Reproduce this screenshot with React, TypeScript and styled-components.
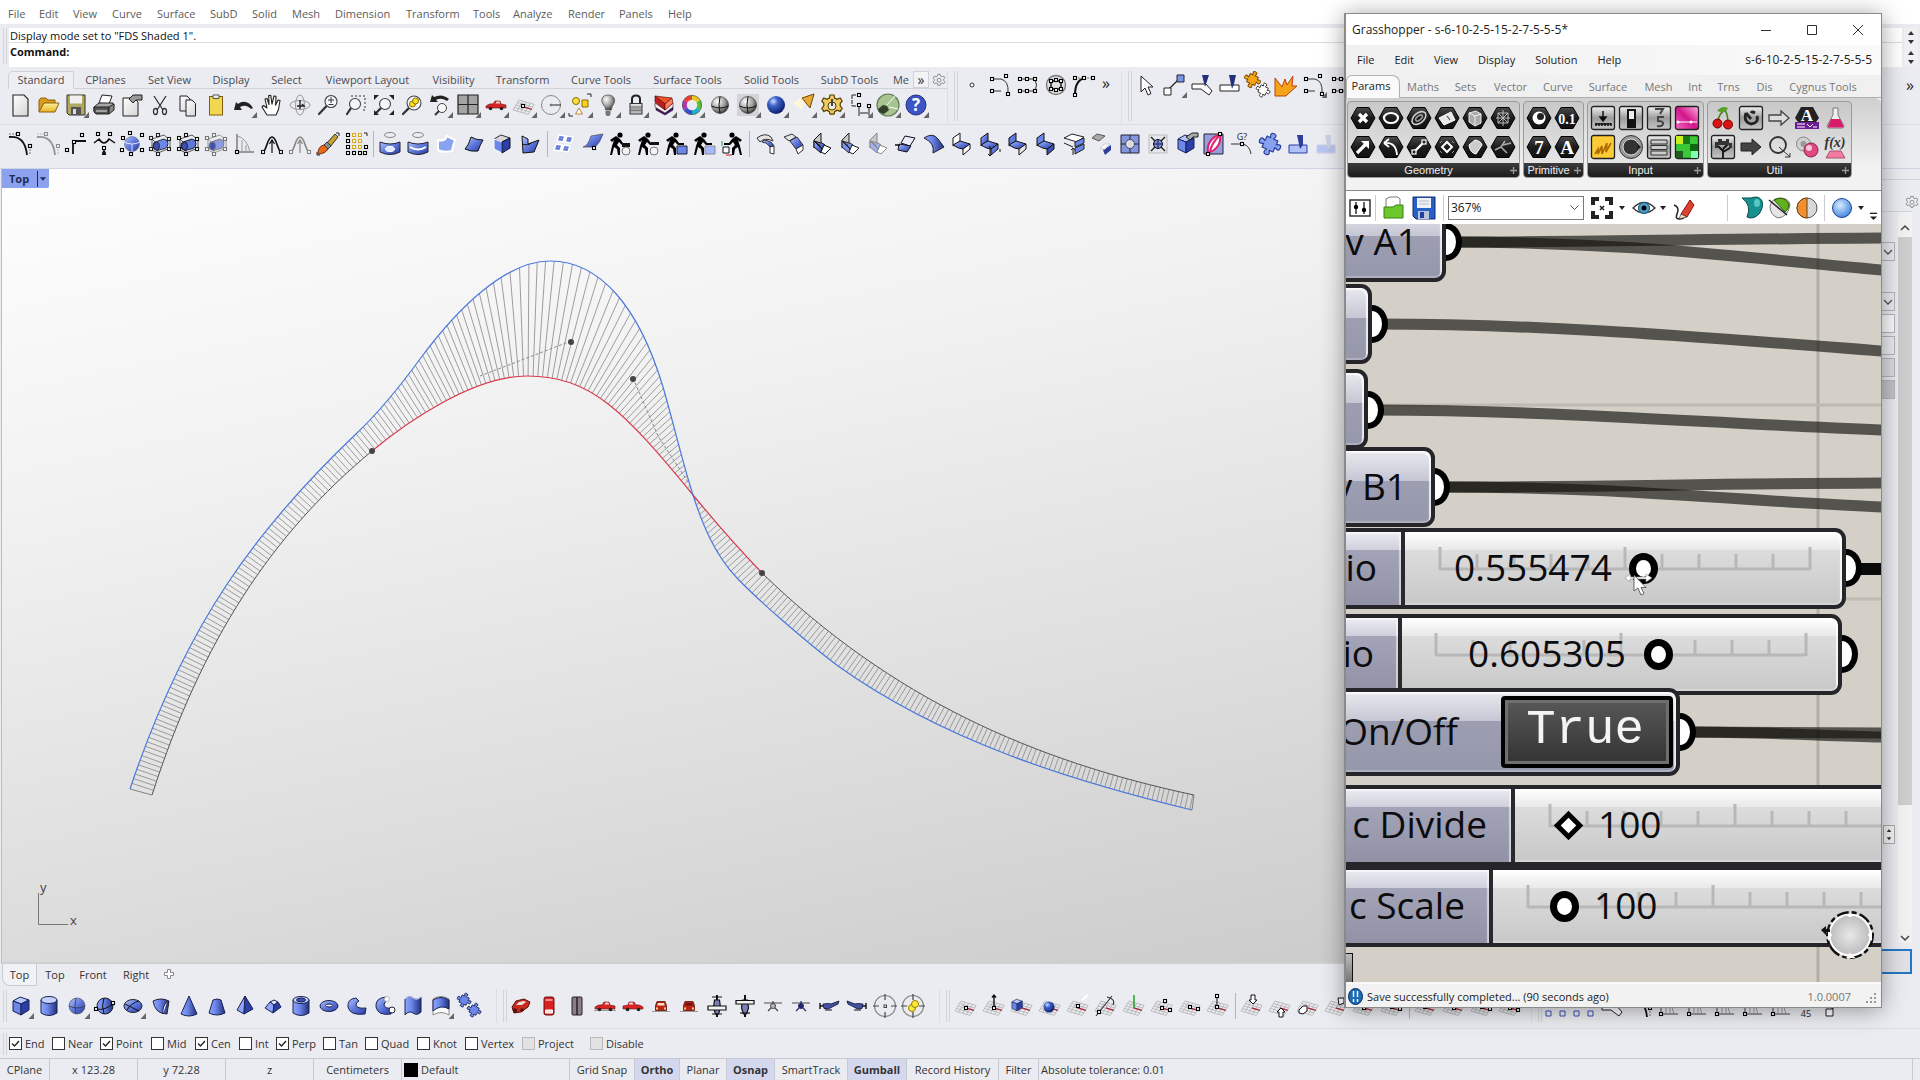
import React, { ReactNode } from "react";
import styled, { createGlobalStyle, css } from "styled-components";

const UI = `"Open Sans", "Noto Sans", "Liberation Sans", sans-serif`;

const Global = createGlobalStyle`
  * { box-sizing: border-box; }
  html, body, #root { height: 100%; margin: 0; }
  body { font: 11px/16px ${UI}; color: #333; background: #ebecf1; overflow: hidden; }
  button, input, select { font: inherit; color: inherit; margin: 0; }
  button { border: 0; padding: 0; background: none; }
`;

/* ---------- shared drawing pieces ---------- */

const DefsSvg = styled.svg`
  position: absolute;
  width: 0;
  height: 0;
`;

const Defs = () => (
  <DefsSvg aria-hidden="true">
    <defs>
      <linearGradient id="blue" x1="0" y1="0" x2="1" y2="1">
        <stop offset="0" stopColor="#b4c4ff" />
        <stop offset=".5" stopColor="#5f78dc" />
        <stop offset="1" stopColor="#2a3a9c" />
      </linearGradient>
      <linearGradient id="blueH" x1="0" y1="0" x2="1" y2="0">
        <stop offset="0" stopColor="#8fa6ff" />
        <stop offset=".4" stopColor="#6c86ea" />
        <stop offset="1" stopColor="#22307e" />
      </linearGradient>
      <radialGradient id="ballBlue" cx=".35" cy=".3" r=".75">
        <stop offset="0" stopColor="#cfe0ff" />
        <stop offset=".35" stopColor="#3d62cc" />
        <stop offset="1" stopColor="#0a1a66" />
      </radialGradient>
      <radialGradient id="ballSky" cx=".4" cy=".35" r=".7">
        <stop offset="0" stopColor="#d8ecff" />
        <stop offset="1" stopColor="#3c82dc" />
      </radialGradient>
      <radialGradient id="ballGray" cx=".35" cy=".3" r=".75">
        <stop offset="0" stopColor="#fff" />
        <stop offset=".6" stopColor="#9a9a9a" />
        <stop offset="1" stopColor="#333" />
      </radialGradient>
      <linearGradient id="yellow" x1="0" y1="0" x2="0" y2="1">
        <stop offset="0" stopColor="#fff0a0" />
        <stop offset="1" stopColor="#e8b420" />
      </linearGradient>
      <linearGradient id="paper" x1="0" y1="0" x2="1" y2="1">
        <stop offset="0" stopColor="#fff" />
        <stop offset="1" stopColor="#d4d4d4" />
      </linearGradient>
      <linearGradient id="hex" x1="0" y1="0" x2="0" y2="1">
        <stop offset="0" stopColor="#4a4a4a" />
        <stop offset=".5" stopColor="#1c1c1c" />
        <stop offset="1" stopColor="#111" />
      </linearGradient>
      <linearGradient id="metal" x1="0" y1="0" x2="0" y2="1">
        <stop offset="0" stopColor="#f2f2f2" />
        <stop offset=".5" stopColor="#9c9c9c" />
        <stop offset="1" stopColor="#c8c8c8" />
      </linearGradient>
      <linearGradient id="pink" x1="0" y1="1" x2="1" y2="0">
        <stop offset="0" stopColor="#f06cc0" />
        <stop offset=".5" stopColor="#d4148c" />
        <stop offset="1" stopColor="#ffb0e0" />
      </linearGradient>
      <radialGradient id="knob" cx=".5" cy=".5" r=".6">
        <stop offset="0" stopColor="#e8e8e8" />
        <stop offset="1" stopColor="#b4b4b4" />
      </radialGradient>
    </defs>
  </DefsSvg>
);

const pt = (x: number, y: number, c = "#000") => (
  <rect key={`${x}-${y}`} x={x - 1.5} y={y - 1.5} width="3" height="3" fill="#fff" stroke={c} strokeWidth="1.1" />
);
const pts = (list: number[][], c?: string) => list.map(([x, y]) => pt(x, y, c));

const planeGrid = (extra?: ReactNode) => (
  <>
    <g stroke="#b0b0b0" strokeWidth=".8" fill="none">
      {[0, 1, 2, 3, 4].map((i) => (
        <path key={i} d={`M${9 + i * 3.8} ${9 + i * 1.1}l-6 10M${9 - i * 1.5} ${9 + i * 2.5}l15.2 4.4`} />
      ))}
    </g>
    <path d="M14 16l8 2.4" stroke="#b03040" strokeWidth="1.4" />
    {extra}
  </>
);

const lens = (x = 15, y = 11, r = 5.5, fill = "#f4f6ff") => (
  <>
    <path d={`M${x - r * 0.7} ${y + r * 0.7}L5 23`} stroke="#333" strokeWidth="2.2" strokeLinecap="round" />
    <circle cx={x} cy={y} r={r} fill={fill} stroke="#444" strokeWidth="1.1" />
  </>
);

const gearPath =
  "M12 4h4l.6 3 2.6 1.4 3-1.4 2 3.2-2 2.2v2.6l2 2.2-2 3.2-3-1.2-2.6 1.4-.6 2.6h-4l-.6-2.6-2.6-1.4-3 1.2-2-3.2 2-2.2v-2.6l-2-2.2 2-3.2 3 1.4L11.4 7z";

const cube = (s = "#1a2250") => (
  <g stroke={s} strokeWidth="1" strokeLinejoin="round">
    <path d="M6 9l7-4 9 3-8 4z" fill="#b8c8ff" />
    <path d="M6 9l8 3v11l-8-4z" fill="#6c86ea" />
    <path d="M14 12l8-4v10l-8 5z" fill="#2c3fa8" />
  </g>
);

const cylPts = (c: string, f: string) => (
  <>
    <path d="M6 9l12-4 6 5-12 5zM6 9v11l6 3 12-5v-8M12 15v8" fill="none" stroke={c} strokeWidth=".7" />
    <path d="M9 12l9-3q4 1 4 4.500t-3 5l-8 2q-4-1-4-4.500t2-4z" fill={f} stroke={c} strokeWidth=".9" />
    <ellipse cx="10.5" cy="16" rx="3" ry="4" fill="#3c50b4" stroke={c} strokeWidth=".8" />
    {pts([[5, 8], [12, 5], [23, 9], [5, 19], [12, 24], [23, 19]], c)}
  </>
);

const man = (obj: ReactNode) => (
  <>
    <circle cx="14" cy="5" r="2.6" fill="#000" />
    <path d="M4 10l6-4 4 3 3 4 5 0v2l-6 0-3-3-2 3 3 3 0 7h-2l-1-6-3-2-2 8H4l2-9 2-6-2 2z" fill="#000" />
    {obj}
  </>
);

const zed = (a: string, b: string) => (
  <g stroke="#111" strokeWidth="1" strokeLinejoin="round">
    <path d="M5 8l7-5v8l-7 5z" fill={a} />
    <path d="M5 15l7-4 10 3-7 5q-4 0-10-4z" fill="url(#blue)" />
    <path d="M15 19l7-5v5l-7 6z" fill={b} />
  </g>
);

const ell = (c: string, f: string) => (
  <g stroke={c} strokeWidth="1" strokeLinejoin="round">
    <path d="M6 10l7-7v10l-7 5z" fill="#c8c8c8" />
    <path d="M6 11l8 8-1 4-7-6z" fill={f} />
    <path d="M6 11q5 2 8 8l3-4q-4-3-4-2z" fill={f} />
    <path d="M16 15l7 3-6 6-4-2z" fill="#fff" />
  </g>
);

const puzzle = (f: string, s: string) => (
  <path
    d="M8 8h4q-3-5 1.500-5t1.500 5h5v4q5-3 5 1.500t-5 1.500v5h-4q3 5-1.500 5t-1.500-5h-5v-4q-5 3-5-1.500t5-1.500z"
    transform="rotate(25 14 14)"
    fill={f}
    stroke={s}
    strokeWidth="1.2"
    strokeLinejoin="round"
  />
);

const bell = (c: string) => (
  <>
    <path d="M4 23c5-2 5-16 10-16s5 14 10 16" fill="none" stroke={c} strokeWidth="1.7" />
    <path d="M14 23V11m-2.500 3l2.500-4 2.500 4" fill="none" stroke={c} strokeWidth="1.2" />
    {pts([[5, 22], [23, 22]], c)}
  </>
);

const doc = <path d="M7 4h11l4 4v17H7z" fill="url(#paper)" stroke="#222" strokeWidth="1.1" />;
const gball = (
  <>
    <circle cx="14" cy="14" r="8.5" fill="url(#ballGray)" stroke="#333" strokeWidth=".6" />
    <path d="M5.500 15q8.500 4 17 0M14 5.500q-2 8 0 17" stroke="#111" fill="none" />
  </>
);
const splitter = (a: string, b: string) => (
  <>
    <path d="M5 15h18v8H5z" fill={b} stroke={a} strokeWidth="1" />
    <path d="M13 5h6v10l-3 4z" fill={a} />
  </>
);
const car = (flip = false) => (
  <g transform={flip ? "translate(28 0) scale(-1 1)" : undefined}>
    <path d="M4 15q4-3 7-2l2-3h5l1 3 5 1v3H4z" fill="#d82424" stroke="#701010" strokeWidth=".6" />
    <path d="M13.500 12.500l1-2h3l.5 2z" fill="#f4dada" />
    <circle cx="8.5" cy="17.5" r="1.8" fill="#222" />
    <circle cx="19.5" cy="17.5" r="1.8" fill="#222" />
  </g>
);
const carFront = (c: string) => (
  <>
    <path d="M5 19.500h18" stroke="#999" />
    <path d="M10 9.500h8l1.500 4v5h-11v-5z" fill="#b82418" stroke="#5c100c" strokeWidth=".8" />
    <path d="M11 11h6l.8 2.500h-7.600z" fill={c} />
    <path d="M9 15.500h2v2H9zm8 0h2v2h-2z" fill="#ffd080" />
  </>
);
const plane = (c: string, low: boolean) => (
  <g fill={c} stroke={c}>
    <path d="M5 11h18" strokeWidth="1.2" stroke="#666" />
    <circle cx="14" cy="14" r="2.5" fillOpacity={low ? 1 : 0.3} />
    <path d="M12 16l-3 3M16 16l3 3M14 9v3" strokeWidth="1.2" />
  </g>
);
const heli = (flip = false) => (
  <g transform={flip ? "translate(28 0) scale(-1 1)" : undefined}>
    <path d="M5 11v6M5 14h5" stroke="#111" strokeWidth="1.4" />
    <path d="M8 12q7-1 8 0l8-3-1 3-6 3q-3 3-8 1.500z" fill="#4450a0" stroke="#181c40" strokeWidth=".9" />
    <path d="M10 18h7" stroke="#111" />
  </g>
);
const target = (c: ReactNode) => (
  <>
    <circle cx="14" cy="14" r="10.5" fill="none" stroke="#888" strokeWidth="1.2" />
    <path d="M14 2v6M14 20v6M2 14h6M20 14h6" stroke="#444" strokeWidth="1.2" />
    {c}
  </>
);
const jet = (wide: boolean) => (
  <g stroke="#111" strokeWidth="1.2">
    <path d="M14 3v22" strokeWidth="2" />
    <path d="M11.500 8h5l1 8-2 6h-3l-2-6z" fill="#7c80b8" />
    <path d={wide ? "M5 14h18v4H5z" : "M5 8.500h18v3.500H5z"} fill="#f2f2f2" />
    <path d={wide ? "M9 5h10M9 22h10" : "M9 21h10"} />
  </g>
);

/* ---------- toolbar glyphs ---------- */

const glyphs: Record<string, ReactNode> = {
  New: doc,
  Open: (
    <g stroke="#8a6010" strokeWidth="1" strokeLinejoin="round">
      <path d="M5 21V9l2-2h5l2 2h7v4" fill="#d89c1c" />
      <path d="M5 21l5-9h15l-4 9z" fill="url(#yellow)" />
    </g>
  ),
  Save: (
    <>
      <path d="M5 4h18v20H7l-2-2z" fill="#b0a860" stroke="#333" />
      <path d="M8 4.500h12v8H8z" fill="#f0f0f0" />
      <path d="M9 16h10v8H9z" fill="#555" />
      <path d="M11 18h3v5h-3z" fill="#ddd" />
    </>
  ),
  Print: (
    <g stroke="#222" strokeWidth="1" strokeLinejoin="round">
      <path d="M9 12l3-8 10 1-3 8z" fill="#fff" />
      <path d="M4 16l5-4h14l1 3-5 5H4z" fill="#a8a8a8" />
      <path d="M4 16h15v7H6l-2-2z" fill="#555" />
      <path d="M19 16l5-3v6l-5 4z" fill="#888" />
      <path d="M6 20h11" stroke="#eee" />
    </g>
  ),
  Export: (
    <>
      <path d="M5 7h11l4 4v14H5z" fill="url(#paper)" stroke="#222" />
      <path d="M11 8l4-4h9v5h-6l-3 3z" fill="#999" stroke="#222" />
    </>
  ),
  Cut: (
    <g fill="none" stroke="#333" strokeWidth="1.3">
      <path d="M8 5l9 14M20 5l-9 14" />
      <ellipse cx="9.5" cy="20.5" rx="2" ry="3" />
      <ellipse cx="18.5" cy="20.5" rx="2" ry="3" />
    </g>
  ),
  Copy: (
    <g stroke="#222" strokeWidth="1" fill="url(#paper)">
      <path d="M6 5h7l3 3v12H6z" />
      <path d="M12 9h6l3.500 3.500V25H12z" />
    </g>
  ),
  Paste: (
    <>
      <rect x="7.5" y="5.5" width="13" height="18.5" fill="#f2d850" stroke="#806010" />
      <path d="M11 7.500V4h6v3.500z" fill="#eee" stroke="#555" />
    </>
  ),
  Undo: <path d="M4 19l2-8 2 2c5-4 11-3 15 4l-2 1c-4-4-7-4-11-2l2 3z" fill="#222" />,
  Pan: (
    <path
      d="M9 24l-5-8 1.500-1.500L9 17 7 8l2-.5 2 6-.3-9 2-.3 1.300 9L16 5l2 .3-.4 9L20 9l2 .5-1.500 9L18 24z"
      fill="#fff"
      stroke="#222"
      strokeWidth="1.1"
      strokeLinejoin="round"
    />
  ),
  Rotate: (
    <g fill="none" stroke="#999">
      <ellipse cx="14" cy="14" rx="10" ry="4.5" />
      <ellipse cx="14" cy="14" rx="4.5" ry="10" />
      <path d="M14 9v9M11 15h7l-2-2" stroke="#222" strokeWidth="1.4" />
    </g>
  ),
  Zoom: (
    <>
      {lens(17, 10.5, 6)}
      <path d="M14 9h6M17 6v6M14.500 13.500h5" stroke="#333" />
    </>
  ),
  "Zoom Window": (
    <>
      <path d="M9 5h14v14h-4" fill="none" stroke="#333" strokeDasharray="2 2" />
      {lens(13, 13, 5.5)}
    </>
  ),
  "Zoom Extents": (
    <>
      {lens(15, 13, 5.5)}
      <path d="M4 4h5L4 9zM24 4h-5l5 5zM24 24h-5l5-5zM4 24v-5l5 5z" fill="#222" />
    </>
  ),
  "Zoom Selected": (
    <>
      {lens(16, 12, 7)}
      <circle cx="14.5" cy="13" r="3" fill="#ffe020" stroke="#887000" />
      <circle cx="17.5" cy="10" r="3" fill="#ffe020" stroke="#887000" />
    </>
  ),
  "Zoom Previous": (
    <>
      <path d="M4 11l2-7 2 2q8-4 15 2l-2 2q-6-4-11-1l2 2z" fill="#222" />
      <circle cx="16" cy="17" r="4.5" fill="#f8f8f8" stroke="#444" />
      <path d="M13 20l-4 4" stroke="#333" strokeWidth="2" />
    </>
  ),
  "4View": (
    <g stroke="#222" strokeWidth="1.2">
      <path d="M4 4h20v19H4z" fill="#a4a4a4" />
      <path d="M14 4v19M4 13.500h20" />
    </g>
  ),
  Car: car(),
  CPlane: planeGrid(pt(13, 15)),
  Circle: (
    <g fill="none" stroke="#888">
      <circle cx="13" cy="14" r="9.5" />
      <path d="M13 14h10" stroke="#222" />
      <circle cx="13" cy="14" r="1" fill="#222" />
    </g>
  ),
  Shapes: (
    <g stroke="#8a6a00">
      <circle cx="10" cy="10" r="3.5" fill="#ffe040" />
      <path d="M16 9h6v7h-6z" fill="#ffd020" />
      <path d="M13 17l3.500 6h-7z" fill="#fff" stroke="#c08030" />
      <path d="M21 3h4v3M3 22v3h4" stroke="#222" fill="none" />
    </g>
  ),
  Bulb: (
    <>
      <path d="M14 4c7 0 8 6 5 10-1 2-1.500 3-1.500 5h-6c0-2-.5-3-2-5C6 9 8 4 14 4z" fill="url(#ballGray)" stroke="#555" strokeWidth=".8" />
      <path d="M11.500 20h5v3l-1 2h-3l-1-2z" fill="#777" />
    </>
  ),
  Lock: (
    <>
      <path d="M10 13V8q0-3.500 4-3.500T18 8v5" fill="none" stroke="#222" strokeWidth="2" />
      <rect x="8" y="12.5" width="12" height="10.5" fill="url(#metal)" stroke="#333" />
      <path d="M9 16h10M9 19.500h10" stroke="#777" />
    </>
  ),
  Layer: (
    <g strokeWidth=".6" stroke="#400" strokeLinejoin="round">
      <path d="M6 17l9 5 8-6v3l-8 5-9-5z" fill="#24248c" />
      <path d="M5 12l10 7 8-7v4l-8 6-10-6z" fill="#f4f4f4" />
      <path d="M5 5l17 2-7 6z" fill="#f0522c" />
      <path d="M5 5l10 8v6L5 11z" fill="#c41c1c" />
      <path d="M15 13l7-6 1 5-8 7z" fill="#ff8060" />
    </g>
  ),
  Color: (
    <g fill="none" strokeWidth="4.5">
      <path d="M14 6.500A7.500 7.500 0 0 1 20.500 10.200" stroke="#e8c820" />
      <path d="M20.500 10.200A7.500 7.500 0 0 1 20.500 17.800" stroke="#58c030" />
      <path d="M20.500 17.800A7.500 7.500 0 0 1 14 21.500" stroke="#20b0c8" />
      <path d="M14 21.500A7.500 7.500 0 0 1 7.500 17.800" stroke="#3850d8" />
      <path d="M7.500 17.800A7.500 7.500 0 0 1 7.500 10.200" stroke="#b030b0" />
      <path d="M7.500 10.200A7.500 7.500 0 0 1 14 6.500" stroke="#e84030" />
      <circle cx="14" cy="14" r="9.6" stroke="#555" strokeWidth=".7" />
    </g>
  ),
  Shaded: gball,
  "Shaded Selected": (
    <>
      <rect x="3" y="3" width="22" height="22" fill="#d4d4d8" />
      {gball}
    </>
  ),
  Rendered: <circle cx="14" cy="14" r="9" fill="url(#ballBlue)" />,
  Spotlight: (
    <>
      <path d="M3 12l13-8-4 15z" fill="#fff4dc" />
      <path d="M12 7l12-4-4 14z" fill="#e8a838" stroke="#704800" />
    </>
  ),
  Options: (
    <>
      <path d={gearPath} fill="#f0cc60" stroke="#553c00" strokeWidth="1.2" />
      <circle cx="14" cy="15" r="4" fill="#eee" stroke="#553c00" />
      <path d="M14 8v7" stroke="#444" strokeWidth="2" />
    </>
  ),
  Dimension: (
    <g fill="none" stroke="#222">
      <path d="M6 4h9M6 4v11M6 15h9" strokeDasharray="4 1" />
      <path d="M13 16v9M23 14v11M14 22h8" />
      {pts([[13, 4], [13, 14], [23, 15]])}
    </g>
  ),
  Grasshopper: (
    <>
      <circle cx="14" cy="14" r="11" fill="#a8c490" stroke="#667a58" strokeWidth="1.2" />
      <path d="M4 18l5-4 4 1 2 4-5 4-5-2z" fill="#34402c" />
      <path d="M13 14l9-10M15 16l9 2" stroke="#fff" />
    </>
  ),
  Help: (
    <>
      <circle cx="14" cy="14" r="10" fill="#3c54c4" stroke="#22307c" />
      <text x="14" y="20" textAnchor="middle" fontSize="17" fontWeight="700" fill="#fff">?</text>
    </>
  ),

  Fillet: (<><path d="M3 7q16-2 18 18" fill="none" stroke="#111" strokeWidth="1.8" /><path d="M3 4h8M24 24v-8" stroke="#777" strokeDasharray="2 1" />{pts([[12, 4], [24, 16]])}</>),
  "Fillet Muted": (<g opacity=".4"><path d="M3 7q16-2 18 18" fill="none" stroke="#111" strokeWidth="1.8" /><path d="M3 4h8M24 24v-8" stroke="#777" strokeDasharray="2 1" />{pts([[12, 4], [24, 16]])}</g>),
  Corner: (<><path d="M24 11h-9q-4 0-4 4v9" fill="none" stroke="#111" strokeWidth="1.8" />{pts([[20, 5], [12, 12], [5, 20]])}</>),
  Zigzag: (<><path d="M4 13l5-4q5 8 10 0l6 4" fill="none" stroke="#111" strokeWidth="1.5" />{pts([[8, 4], [20, 4], [14, 18]])}<path d="M12 23h4l-2-4zM12 23h4v2h-4z" fill="#111" /></>),
  "Sphere Points": (<><circle cx="14" cy="14" r="7.5" fill="url(#blue)" stroke="#667" strokeWidth=".6" /><path d="M14 14v8M6 12q8 4 16 0" stroke="#dde4ff" fill="none" />{pts([[5, 8], [12, 3], [24, 5], [4, 20], [24, 20], [13, 24]])}</>),
  "Box Points A": cylPts("#222", "#6c86ea"),
  "Box Points B": cylPts("#111", "#5f78dc"),
  "Box Points C": cylPts("#777", "#8c9ce0"),
  Axis: (<g fill="none" stroke="#444"><path d="M7 22V4M7 22h17" /><path d="M7 6q10 2 13 16M12 22V10M16 22v-7" stroke="#999" />{pt(7, 22)}</g>),
  Bell: bell("#111"),
  "Bell Muted": bell("#888"),
  Brush: (<><path d="M12 14L21 4l3 3-8 10z" fill="#c8a030" stroke="#333" /><path d="M10 15l3-3 4 4-3 3z" fill="#8090a0" stroke="#333" /><path d="M4 22q1-6 6-7l4 4q-3 5-10 5z" fill="#e86c1c" stroke="#702c00" /><path d="M22 3h3v3M3 22v3h3" fill="none" stroke="#222" /></>),
  "Grid Points": (<><g fill="none">{pts([[6, 5], [6, 11], [6, 17], [6, 23], [12, 23], [18, 23]])}{pts([[12, 5], [18, 5], [12, 11], [18, 11], [12, 17], [18, 17]], "#d8a820")}{pts([[24, 17], [23, 23]])}</g><path d="M22 3h3v3" stroke="#222" fill="none" /></>),
  "Loft Ring": (<><ellipse cx="14" cy="5" rx="5.5" ry="2.5" fill="none" stroke="#888" /><path d="M4 12q10 4 20 0v10q-10 5-20 0z" fill="url(#blue)" stroke="#223" /><ellipse cx="14" cy="19" rx="4.5" ry="2.5" fill="#dfe6ff" stroke="#fff" /></>),
  "Loft Band": (<><ellipse cx="14" cy="5" rx="5.5" ry="2.5" fill="none" stroke="#888" /><path d="M4 12q10 4 20 0v10q-10 5-20 0z" fill="url(#blue)" stroke="#223" /><path d="M6 17q8 5 16 0" fill="none" stroke="#fff" strokeWidth="2" /></>),
  "Patch Light": <path d="M6 10q7 2 9-4l8 4q-2 5-3 11-8 2-14-1z" fill="#88a4f0" stroke="#fff" strokeWidth="2" />,
  Patch: <path d="M5 19q4-4 6-12 5 3 12 3-3 5-5 11-7 1-13-2z" fill="url(#blue)" stroke="#111" />,
  "Box Edge": (<g strokeLinejoin="round"><path d="M6 9l7-4 9 3-8 4z" fill="#d8d8d8" stroke="#333" /><path d="M6 9l8 3v11l-8-4z" fill="#6c86ea" stroke="#fff" /><path d="M14 12l8-4v10l-8 5z" fill="#2c3fa8" stroke="#112" /></g>),
  Cross: (<g stroke="#111" strokeLinejoin="round"><path d="M6 6l6 3v5l11-4-5 12-11 1z" fill="url(#blue)" /><path d="M6 14q6 2 9-1" fill="none" /></g>),
  "Four Patches": (<g fill="#6c84d8" stroke="#fff" strokeWidth="1.5"><path d="M9 5l6 1-2 6-6-1zM17 6l6 1-2 6-6-1zM6 14l6 1-2 6-6-1zM14 15l6 1-2 6-6-1z" /></g>),
  "Curved Patch": (<><path d="M5 17q5-1 8-11l12-2q-3 9-8 13z" fill="url(#blue)" stroke="#445" strokeWidth=".7" />{pt(16, 18)}</>),
  "Trolley A": man(<><path d="M16 13h8v4h-8z" fill="#111" /><circle cx="20" cy="21" r="4" fill="#f4f4f4" stroke="#777" /></>),
  "Trolley B": man(<><path d="M17 12h8v3h-8z" fill="#111" /><circle cx="20" cy="21" r="4" fill="#f4f4f4" stroke="#777" /></>),
  "Trolley Box": man(<path d="M15 16h10v8H15z" fill="#6c86ea" stroke="#223" />),
  "Trolley Box Light": man(<path d="M15 16h10v8H15z" fill="#a8b8ff" stroke="#889" />),
  "Trolley Back": (<><g transform="translate(28 0) scale(-1 1)">{man(null)}</g><path d="M5 17h6v6H5z" fill="#fff" stroke="#111" /><path d="M4 16v-5" stroke="#20a040" /><path d="M8 25h6" stroke="#d02020" /></>),
  Sweep1: (<g stroke="#333"><path d="M5 8q8-6 14-1l2 4q-8-4-13 1z" fill="#e4e4e4" /><path d="M12 10q8 1 10 6l-4 1q-3-5-8-5z" fill="url(#blue)" /><path d="M18 17l4-1v8l-4-1z" fill="#fff" /></g>),
  Sweep2: (<g stroke="#333"><path d="M4 7l8-3 4 3-7 4z" fill="#e4e4e4" /><path d="M10 11l7-4 6 8-7 4z" fill="url(#blue)" /><path d="M16 19l7-4v5l-5 4z" fill="#fff" /></g>),
  "Angle A": ell("#111", "url(#blue)"),
  "Angle B": ell("#222", "#7c94f0"),
  "Angle C": ell("#888", "#a0b0ec"),
  Tilt: (<g stroke="#111"><path d="M13 6l10 2-5 8-9-3z" fill="#e8ebf8" /><path d="M7 14l12 2-4 6-9-2z" fill="url(#blue)" /><path d="M3 15h5" strokeWidth="1.5" /></g>),
  Fan: <path d="M4 8q9-6 14 1l6 8-11 6q2-10-9-15z" fill="url(#blueH)" stroke="#223" />,
  "Step A": zed("#fff", "#fff"),
  "Step B": (<>{zed("url(#blue)", "#5f78dc")}<path d="M14 16v10m-2-2l2 2 2-2M24 19v3" stroke="#111" fill="none" /></>),
  "Step C": zed("#5f78dc", "#e8e8e8"),
  "Step D": zed("#6c86ea", "#3c50b4"),
  Layers: (<g stroke="#222"><path d="M4 8l8-4 12 3-7 5z" fill="#fff" /><path d="M15 12l9-4v5l-9 4zM15 18l9-4v5l-9 5z" fill="#6c86ea" /><path d="M4 13l9 4M13 25v-7m-2 2l2-2 2 2" fill="none" /></g>),
  Offset: (<><path d="M4 8l5-4 8 2-6 5z" fill="#aaa" stroke="#555" /><path d="M15 20l8-5v5l-6 5z" fill="#2c3f9c" /><path d="M12 19l4-5h6l-5 5z" fill="#fff" stroke="#ccc" /></>),
  "Target Box": (<><path d="M5 5h18v18H5z" fill="#8496e0" stroke="#223" /><path d="M14 5v18M5 14h18" stroke="#223" /><circle cx="14" cy="14" r="4.5" fill="#ddd" stroke="#445" /></>),
  "Target Arrows": (<><path d="M5 5h18v18H5z" fill="#e4e6ee" stroke="#bbb" /><path d="M7 7l4 4M21 7l-4 4M7 21l4-4M21 21l-4-4M14 9v10M9 14h10" stroke="#222" strokeWidth="1.4" /><circle cx="14" cy="14" r="4.5" fill="#3c54b4" fillOpacity=".6" stroke="#112" /></>),
  "Box Tag": (<>{cube()}<path d="M14 7l6-4h6v4h-5l-3 3z" fill="#aaa" stroke="#222" /></>),
  Zebra: (<><path d="M4 4h19v20H4z" fill="#94a0dc" stroke="#223" /><path d="M8 23Q6 10 20 4q2 14-12 19z" fill="#fff" stroke="#e02070" strokeWidth="2" /><path d="M10 21q2-8 9-15" stroke="#e02070" strokeWidth="2" fill="none" />{pts([[20, 4], [8, 24]])}</>),
  Continuity: (<><path d="M3 14h12q7 2 8 10" fill="none" stroke="#333" />{pt(14, 14)}<text x="14" y="10" textAnchor="middle" fontSize="9" fill="#222">G?</text></>),
  Puzzle: puzzle("#88a0f0", "#2c3f9c"),
  "Split Blue": splitter("#2c3f9c", "#b0c0f8"),
  "Split Faint": <g opacity=".5">{splitter("#b0b8d8", "#88a0f0")}</g>,

  Point: <circle cx="14" cy="14" r="2" fill="#fff" stroke="#333" />,
  "Edit Points": (<><path d="M6 8h9q8 2 7 14M6 20h9" fill="none" stroke="#333" />{pts([[6, 8], [20, 5], [6, 20], [22, 23]])}</>),
  "Closed Points": (<><path d="M6 8h15q3 6 0 12H6" fill="none" stroke="#333" />{pts([[6, 8], [13, 8], [21, 8], [6, 20], [13, 20], [21, 20]])}</>),
  "Circle Points": (<><circle cx="14" cy="14" r="9.5" fill="#e0e0e0" stroke="#777" strokeWidth="1.4" /><path d="M9 10h10v8H9z" fill="none" stroke="#111" strokeWidth="1.4" />{pts([[9, 10], [14, 9], [19, 10], [9, 18], [14, 19], [19, 18]])}</>),
  "Arc Points": (<><path d="M5 24Q5 8 16 7" fill="none" stroke="#111" strokeWidth="2" /><path d="M5 7h20" stroke="#777" strokeDasharray="2 1" />{pts([[5, 7], [14, 7], [23, 7], [5, 24]])}</>),
  Select: <path d="M9 5v16l4-4 3 7 3-1.500-3-6.500h5z" fill="#fff" stroke="#222" strokeLinejoin="round" />,
  Move: (<><path d="M8 19L20 7" stroke="#222" strokeWidth="1.3" /><path d="M17 4h7v7h-7z" fill="#7c94e8" stroke="#223" /><path d="M4 17h7v7H4z" fill="#fff" stroke="#222" /></>),
  Trim: (<><path d="M4 13h14l6 7-3 4-8-6H4z" fill="#fff" stroke="#222" /><path d="M14 4h7l-4 12z" fill="#22307c" /></>),
  Split: (<><path d="M4 14h19v6H4z" fill="#fff" stroke="#222" /><path d="M13 4h7l-2 9-2 5z" fill="#22307c" /></>),
  Join: (<><g transform="translate(-2 -2) scale(.75)">{puzzle("#f4a418", "#704400")}</g><g transform="translate(10 10) scale(.65)">{puzzle("#fff", "#222")}</g></>),
  Explode: <path d="M3 25V7l7 9 3-8 2 6 6-9-1 10 5 0-8 7-3 3z" fill="#f4a418" stroke="#c04010" />,

  Box: cube(),
  Cylinder: (<g stroke="#1a2250"><path d="M6 8v13q8 5 16 0V8z" fill="url(#blueH)" /><ellipse cx="14" cy="8" rx="8" ry="3.5" fill="#c4d0ff" /></g>),
  Sphere: (<><circle cx="14" cy="14" r="8" fill="url(#blue)" stroke="#556" strokeWidth=".7" /><path d="M6 14q8 4 16 0M13 6q-2 8 0 16" stroke="#334" fill="none" strokeWidth=".8" /></>),
  "Sphere 2": (<><circle cx="14" cy="14" r="8" fill="url(#blueH)" stroke="#111" strokeWidth=".9" /><path d="M5 17q9 2 18-6M13 6q-3 8 0 16" stroke="#111" fill="none" />{pts([[5, 17], [22, 11]])}</>),
  Ellipsoid: (<><ellipse cx="14" cy="14" rx="9" ry="6.5" fill="url(#blue)" stroke="#223" /><path d="M6 12q8 4 14 7M20 9q-8 2-12 9" stroke="#112" fill="none" /></>),
  Paraboloid: (<path d="M6 9q8-4 16 0l-2 13q-12 0-14-13zM20 10q-5 4-4 12" fill="url(#blueH)" stroke="#223" />),
  Cone: <path d="M14 4l8 18q-8 4-16 0z" fill="url(#blueH)" stroke="#1a2250" />,
  "Truncated Cone": <path d="M10 8q4-2 8 0l4 13q-8 4-16 0z" fill="url(#blueH)" stroke="#1a2250" />,
  Pyramid: (<g stroke="#1a2250" strokeLinejoin="round"><path d="M14 4L6 18l7 4z" fill="#8fa6ff" /><path d="M14 4l8 13-9 5z" fill="#2c3fa8" /></g>),
  "Truncated Pyramid": (<g stroke="#1a2250" strokeLinejoin="round"><path d="M11 10l4-2 4 2-4 3z" fill="#dfe6ff" /><path d="M11 10L6 16l8 5 1-8z" fill="#8fa6ff" /><path d="M19 10l3 5-8 6 1-8z" fill="#2c3fa8" /></g>),
  Tube: (<g stroke="#1a2250"><path d="M6 8v13q8 5 16 0V8z" fill="url(#blueH)" /><ellipse cx="14" cy="8" rx="8" ry="3.5" fill="#c4d0ff" /><ellipse cx="14" cy="8" rx="4.5" ry="2" fill="#3c50b4" /></g>),
  Torus: (<g stroke="#1a2250"><ellipse cx="14" cy="14" rx="9" ry="5.5" fill="url(#blue)" /><ellipse cx="14" cy="13.5" rx="3.5" ry="1.5" fill="#e8ebf8" /></g>),
  Pipe: <path d="M13 6q-9 1-8 9 2 9 17 7l1-6q-9 1-10-3 0-3 3-4z" fill="url(#blue)" stroke="#1a2250" />,
  "Pipe Round": (<><path d="M15 5q-11 1-10 10 2 9 15 7l1-6q-7 1-8-3 0-3 3-4z" fill="url(#blue)" stroke="#1a2250" /><circle cx="21" cy="18" r="3" fill="#fff" stroke="#223" /><circle cx="16" cy="7" r="2.5" fill="#fff" stroke="#bbb" /></>),
  Extrude: (<g stroke="#1a2250"><path d="M6 7q4-4 8-1t8-1v15q-4 4-8 1t-8 2z" fill="url(#blueH)" /><path d="M6 7q4-4 8-1t8-1" fill="none" stroke="#ccd6ff" /></g>),
  "Extrude Cap": (<g stroke="#1a2250"><path d="M6 7q8-5 16 0v16q-8-5-16 0z" fill="#fff" stroke="#888" /><path d="M6 8q8-5 16 0v9q-8-5-16 2z" fill="url(#blueH)" /></g>),
  Boolean: (<><g transform="translate(0 -1) scale(.65)">{puzzle("#6c86ea", "#1a2250")}</g><g transform="translate(10 9) scale(.65)">{puzzle("#6c86ea", "#1a2250")}</g></>),

  "Car Perspective": (<><path d="M5 15l4-6 8-2 6 3-2 5-7 5-7 1z" fill="#c82c20" stroke="#5c100c" /><path d="M9 13l3-3 5-1 2 1-4 3z" fill="#f0dcd8" /><circle cx="8" cy="18.5" r="2.2" fill="#5c100c" /><circle cx="15" cy="18" r="1.8" fill="#5c100c" /></>),
  "Car Top": (<><rect x="9" y="5" width="10" height="18" rx="2" fill="#d82020" stroke="#701010" /><path d="M10.500 8h7M10.500 18h7v3h-7z" stroke="#fff" fill="#f8dada" /></>),
  "Car Bottom": (<><rect x="9" y="5" width="10" height="18" rx="1" fill="#8c7c8c" stroke="#222" /><path d="M14 5v18" stroke="#222" strokeWidth="1.5" /></>),
  "Car Left": (<><path d="M3 18.500h22" stroke="#999" />{car()}</>),
  "Car Right": car(true),
  "Car Front": carFront("#ffe0c0"),
  "Car Back": carFront("#701010"),
  "Jet Top": jet(true),
  "Jet Bottom": jet(false),
  "Jet Front": plane("#444", false),
  "Jet Back": plane("#22286c", true),
  "Heli Left": heli(),
  "Heli Right": heli(true),
  "Set Target": target(<rect x="13" y="13" width="2.5" height="2.5" fill="none" stroke="#444" />),
  "Target Object": target(<><circle cx="13" cy="16" r="3.5" fill="#ffe838" stroke="#908000" /><circle cx="16" cy="12" r="3.5" fill="#ffe838" stroke="#908000" /></>),

  "Plane Origin": planeGrid(pt(14, 16)),
  "Plane Elevation": planeGrid(<><path d="M14 16V3m-2 2.500L14 3l2 2.500" stroke="#111" fill="none" strokeWidth="1.4" />{pt(14, 16)}</>),
  "Plane Object": planeGrid(<g transform="translate(0 4) scale(.65)">{cube()}</g>),
  "Plane Surface": (<>{planeGrid()}<circle cx="13" cy="15" r="5.5" fill="url(#ballBlue)" /></>),
  "Plane Curve": planeGrid(<><path d="M18 8l6-5" stroke="#fff" strokeWidth="2" />{pt(14, 14)}</>),
  "Plane Rotate": planeGrid(<><path d="M4 24L20 4M15 5q9 2 6 8" stroke="#333" fill="none" strokeWidth="1.1" />{pt(7, 20)}</>),
  "Plane Vertical": planeGrid(<path d="M14 16V3" stroke="#20a020" strokeWidth="1.5" />),
  "Plane 3 Points": planeGrid(<>{pts([[14, 16], [17, 9], [22, 18]])}</>),
  "Plane X": planeGrid(<>{pts([[14, 15], [22, 17]])}</>),
  "Plane Z": planeGrid(<><path d="M13 15V4" stroke="#111" />{pts([[13, 15], [13, 4]])}</>),
  "Plane Down": planeGrid(<path d="M13 3h4v5h2l-4 4-4-4h2z" fill="#fff" stroke="#111" />),
  "Plane Up": planeGrid(<path d="M13 25h4v-5h2l-4-4-4 4h2z" fill="#fff" stroke="#111" />),
  "Plane Left": planeGrid(<path d="M5 18l4-4h4v5l-4 3-4-1z" fill="#fff" stroke="#111" />),
  "Plane Back": planeGrid(<path d="M16 6h6v5l-5 2z" fill="#fff" stroke="#111" />),
  Squares: (<g fill="none" stroke="#3c50b4"><path d="M4 19h5v5H4zM18 19h5v5h-5z" /></g>),
  Angle45: (<text x="12" y="25" fontSize="9" textAnchor="middle" fill="#222">45</text>),
  Ellipse: <ellipse cx="14" cy="9" rx="8" ry="5.5" fill="none" stroke="#888" />,
};

/* ---------- generic toolbar parts ---------- */

const ToolButton = styled.button`
  flex: none;
  width: 28px;
  height: 28px;
  display: block;
  svg { display: block; width: 28px; height: 28px; overflow: visible; font-family: ${UI}; }
`;

const Tool = ({ name }: { name: string }) => {
  const flyout = name.endsWith("*");
  const key = flyout ? name.slice(0, -1) : name;
  return (
    <ToolButton type="button" aria-label={key}>
      <svg viewBox="0 0 28 28" aria-hidden="true">
        {glyphs[key]}
        {flyout && <path d="M21.500 27h5.500v-6z" fill="#666" />}
      </svg>
    </ToolButton>
  );
};

const ToolGap = styled.span`
  flex: none;
  width: 6px;
  height: 26px;
  background: linear-gradient(#b4b6be, #b4b6be) center / 1px 100% no-repeat;
`;

const Tools = ({ items }: { items: string[] }) => (
  <>{items.map((n, i) => (n === "|" ? <ToolGap key={i} /> : <Tool key={i} name={n} />))}</>
);

const Grip = styled.span<{ $h: number }>`
  flex: none;
  width: 4px;
  height: ${(p) => p.$h}px;
  border: solid #d2d4da;
  border-width: 0 1px;
`;

/* ---------- Rhino window ---------- */

const Page = styled.div`
  position: relative;
  height: 100vh;
  min-height: 720px;
  display: flex;
  flex-direction: column;
  overflow: hidden;
  background: #ebecf1;
`;

const MenuBar = styled.nav`
  height: 24px;
  padding: 6px 8px 0;
  display: flex;
  background: #fff;
  color: #5c5c5c;
`;

const MenuItem = styled.button<{ $w?: number }>`
  height: 16px;
  ${(p) => (p.$w ? `width: ${p.$w}px;` : "")}
  text-align: left;
  white-space: nowrap;
`;

const CommandArea = styled.section`
  height: 39px;
  margin-top: 4px;
  display: flex;
  gap: 2px;
  padding-left: 3px;
`;

const CommandLines = styled.div`
  flex: 1;
  background: #fff;
  color: #111;
`;

const History = styled.div`
  height: 15px;
  line-height: 15px;
  padding-left: 1px;
  border-bottom: 1px solid #dcdde2;
`;

const Prompt = styled.label`
  display: flex;
  gap: 4px;
  height: 18px;
  line-height: 18px;
  padding-left: 1px;
  font-weight: 700;
  input { flex: 1; border: 0; background: none; outline: 0; padding: 0; font-weight: 400; }
`;

const Spinner = styled.div`
  width: 14px;
  margin-right: 2px;
  display: flex;
  flex-direction: column;
  align-items: center;
  justify-content: space-around;
  background: #f0f0f2;
  svg { width: 8px; height: 5px; }
`;

const ToolbarBand = styled.section`
  height: 58px;
  display: flex;
  border-bottom: 1px solid #dcdee4;
  padding: 4px 0 0 3px;
`;

const MainToolbar = styled.div`
  flex: none;
  width: 945px;
  display: flex;
  border-right: 1px solid #dcdee4;
`;

const MainTools = styled.div`
  flex: 1;
  display: flex;
  flex-direction: column;
  overflow: hidden;
`;

const TabRow = styled.div`
  display: flex;
  height: 18px;
  margin-left: 5px;
  border-bottom: 1px solid #d0d2d8;
`;

const ToolTab = styled.button<{ $w: number; $on?: boolean }>`
  flex: none;
  width: ${(p) => p.$w}px;
  height: 18px;
  line-height: 18px;
  color: #4a4a50;
  white-space: nowrap;
  ${(p) =>
    p.$on &&
    css`
      background: #eeeff3;
      border: 1px solid #cfd1d8;
      border-bottom-color: #eeeff3;
      border-radius: 5px 2px 0 0;
      line-height: 16px;
    `}
`;

const TabMore = styled.button`
  width: 16px;
  background: #f2f3f6;
  border: 1px solid #d0d2d8;
  font-size: 14px;
  line-height: 14px;
`;

const GearButton = styled.button`
  width: 16px;
  margin-left: 2px;
  svg { display: block; width: 16px; height: 16px; }
`;

const IconRow = styled.div`
  display: flex;
  align-items: center;
  height: 28px;
  padding-top: 4px;
`;

const SideTools = styled.div<{ $w?: number }>`
  flex: none;
  ${(p) => (p.$w ? `width: ${p.$w}px;` : "")}
  display: flex;
  padding-left: 6px;
  border-right: 1px solid #dcdee4;
`;

const More = styled.span`
  font-size: 16px;
  line-height: 24px;
  padding: 0 4px;
  color: #222;
`;

const CurveBand = styled.section`
  height: 44px;
  display: flex;
  align-items: center;
  padding: 0 0 6px 3px;
  border-bottom: 1px solid #d0d3e2;
  overflow: hidden;
`;

const ToolLead = styled.span`
  flex: none;
  width: 3px;
`;

const Trailing = styled.div`
  margin-left: auto;
  padding: 2px 2px 0 0;
`;

const Body = styled.main`
  flex: 1;
  min-height: 0;
  display: flex;
`;

const Viewport = styled.section`
  position: relative;
  flex: 1;
  min-width: 0;
  border-left: 1px solid #b8bcd8;
  border-bottom: 2px solid #cfd0d4;
  margin-left: 1px;
  background: linear-gradient(168deg, #fefefe 0%, #f1f1f1 30%, #dedede 62%, #c6c6c6 100%);
`;

const ViewTitle = styled.button`
  position: absolute;
  left: 0;
  top: 0;
  height: 19px;
  display: flex;
  align-items: center;
  gap: 8px;
  padding: 0 2px 0 7px;
  background: #8ca2ee;
  color: #1e2c5c;
  font-weight: 700;
  border-radius: 0 0 2px 0;
  svg { width: 10px; height: 16px; border-left: 1px solid #1e2c5c; }
`;

const Drawing = styled.svg`
  display: block;
  width: 100%;
  height: 100%;
  font: 13px ${UI};
`;

const Dock = styled.aside`
  width: 60px;
  margin-bottom: -12px;
  display: flex;
  flex-direction: column;
  padding-top: 10px;
`;

const DockTabs = styled.div`
  height: 32px;
  border-top: 1px solid #d0d2d8;
  display: flex;
  justify-content: flex-end;
  align-items: flex-end;
  padding-bottom: 1px;
  svg { width: 16px; height: 16px; }
`;

const DockBody = styled.div`
  flex: 1;
  display: flex;
  border-top: 1px solid #d0d2d8;
  margin-right: 8px;
`;

const DockFields = styled.div`
  flex: 1;
  padding: 30px 3px 0 0;
  display: flex;
  flex-direction: column;
  gap: 3px;
`;

const DockField = styled.div<{ $fill?: string; $mt?: number }>`
  height: 19px;
  margin-top: ${(p) => p.$mt ?? 0}px;
  border: 1px solid #b4b6bc;
  background: ${(p) => p.$fill ?? "#ebecf1"};
  display: flex;
  justify-content: flex-end;
  align-items: center;
  svg { width: 12px; height: 8px; }
`;

const DockSpin = styled.div`
  margin-top: 423px;
  margin-left: auto;
  width: 12px;
  height: 19px;
  border: 1px solid #aaa;
  background: #f4f4f4;
  display: flex;
  flex-direction: column;
  align-items: center;
  justify-content: space-around;
  svg { width: 6px; height: 4px; }
`;

const ScrollBar = styled.div`
  width: 14px;
  display: flex;
  flex-direction: column;
  align-items: center;
  background: #f1f1f2;
  svg { flex: none; width: 10px; height: 8px; margin: 12px 0 5px; }
  svg:last-child { margin: 5px 0 1px; }
  i { width: 14px; background: #cdcdcd; flex: 4.6; }
  b { flex: 1; }
`;

const DockButton = styled.button`
  height: 25px;
  margin: 6px 8px 2px 0;
  border: 2px solid #2477c8;
  background: #e1e1e4;
`;

const ViewTabs = styled.div`
  height: 25px;
  display: flex;
  align-items: flex-start;
  padding-left: 2px;
  color: #333;
`;

const ViewTab = styled.button<{ $w: number; $on?: boolean }>`
  width: ${(p) => p.$w}px;
  height: 22px;
  line-height: 20px;
  ${(p) => p.$on && "border: 1px solid #c8cad2; border-top: 0; border-radius: 0 0 2px 8px; background: #f1f2f5;"}
`;

const PlusTab = styled.button`
  width: 16px;
  margin: 4px 0 0 4px;
  svg { display: block; width: 12px; height: 12px; }
`;

const SolidBand = styled.section`
  height: 40px;
  display: flex;
  align-items: center;
  padding: 0 0 6px 3px;
  border-bottom: 1px solid #dadce2;
  overflow: hidden;
`;

const BandEnd = styled.span<{ $w: number }>`
  flex: none;
  width: ${(p) => p.$w}px;
  height: 34px;
  border-right: 1px solid #dcdee4;
  margin-right: 6px;
`;

const BandLead = styled.span`
  flex: none;
  width: 2px;
`;

const SnapBand = styled.section`
  height: 30px;
  display: flex;
  align-items: center;
  padding-left: 3px;
  border-bottom: 1px solid #c8cad2;
`;

const SnapLead = styled.span`
  flex: none;
  width: 6px;
  display: flex;
`;

const SnapOption = styled.label<{ $w: number }>`
  flex: none;
  width: ${(p) => p.$w}px;
  display: flex;
  align-items: center;
  gap: 3px;
  white-space: nowrap;
  input {
    appearance: none;
    flex: none;
    width: 13px;
    height: 13px;
    border: 1px solid #333;
    background: #fff;
  }
  input:disabled { border-color: #b8b8b8; background: #e2e2e2; }
  input:checked {
    background: #fff url("data:image/svg+xml,%3Csvg xmlns='http://www.w3.org/2000/svg' viewBox='0 0 11 11'%3E%3Cpath d='M2 5.5l2.5 2.5L9 3' fill='none' stroke='%23222' stroke-width='1.3'/%3E%3C/svg%3E");
  }
`;

const StatusBar = styled.footer`
  height: 21px;
  display: flex;
  line-height: 22px;
`;

const StatusCell = styled.button<{ $w: number; $on?: boolean; $left?: boolean }>`
  flex: none;
  width: ${(p) => p.$w}px;
  border-right: 1px solid #c8cad2;
  white-space: nowrap;
  display: flex;
  align-items: center;
  gap: 3px;
  justify-content: ${(p) => (p.$left ? "flex-start" : "center")};
  padding-left: ${(p) => (p.$left ? 2 : 0)}px;
  ${(p) => p.$on && "background: #d3d8ee; font-weight: 700;"}
`;

const Swatch = styled.span`
  width: 14px;
  height: 14px;
  background: #000;
`;

/* ---------- curvature graph ---------- */

type P = [number, number];
/** start point followed by [control, control, end] triples */
type Bezier = { from: P; to: [P, P, P][] };

const sample = ({ from, to }: Bezier, steps: number): P[] => {
  const out: P[] = [from];
  let a = from;
  for (const [b, c, d] of to) {
    for (let s = 1; s <= steps; s++) {
      const t = s / steps, u = 1 - t;
      const at = (k: 0 | 1) => u * u * u * a[k] + 3 * u * u * t * b[k] + 3 * u * t * t * c[k] + t * t * t * d[k];
      out.push([at(0), at(1)]);
    }
    a = d;
  }
  return out;
};
const toPath = ({ from, to }: Bezier) => `M${from}` + to.map((s) => `C${s.join(" ")}`).join("");

const leftArc: Bezier = { from: [150, 626], to: [[[200, 471], [270, 365], [370, 282]]] };
const blend: Bezier = {
  from: [370, 282],
  to: [
    [[406, 252], [472, 207], [525, 207]],
    [[589, 207], [622, 242], [691, 326]],
    [[714, 354], [737, 380], [760, 404]],
  ],
};
const rightArc: Bezier = { from: [760, 404], to: [[[890, 530], [1032, 592], [1192, 626]]] };
const envelope: Bezier = {
  from: [128, 620],
  to: [
    [[183, 455], [255, 359], [355, 264]],
    [[376, 244], [399, 216], [418, 190]],
    [[458, 136], [505, 92], [548, 92]],
    [[598, 92], [637, 138], [661, 218]],
    [[672, 256], [681, 295], [691, 326]],
    [[700, 354], [712, 385], [735, 409]],
    [[757, 432], [803, 472], [836, 497]],
    [[941, 572], [1070, 612], [1190, 641]],
  ],
};

const TOOTH_PITCH = 4.8;

const teeth = (() => {
  const base = [...sample(leftArc, 900), ...sample(blend, 500).slice(1), ...sample(rightArc, 900).slice(1)];
  const outer = sample(envelope, 30);
  const lines: string[] = [];
  let walked = 0;
  for (let i = 1; i < base.length - 1; i++) {
    const [x, y] = base[i];
    walked += Math.hypot(x - base[i - 1][0], y - base[i - 1][1]);
    if (walked < TOOTH_PITCH) continue;
    walked -= TOOTH_PITCH;
    const tx = base[i + 1][0] - base[i - 1][0], ty = base[i + 1][1] - base[i - 1][1];
    let best: P | null = null, far = 125;
    for (let j = 1; j < outer.length; j++) {
      const p = outer[j - 1], q = outer[j];
      const d0 = (p[0] - x) * tx + (p[1] - y) * ty, d1 = (q[0] - x) * tx + (q[1] - y) * ty;
      if (d0 * d1 > 0) continue;
      const u = d0 / (d0 - d1 || 1);
      const hit: P = [p[0] + (q[0] - p[0]) * u, p[1] + (q[1] - p[1]) * u];
      const r = Math.hypot(hit[0] - x, hit[1] - y);
      if (r < far) { far = r; best = hit; }
    }
    if (best) lines.push(`M${x.toFixed(1)} ${y.toFixed(1)}L${best[0].toFixed(1)} ${best[1].toFixed(1)}`);
  }
  return lines.join("");
})();

const CurvatureGraph = () => (
  <Drawing role="img" aria-label="Curvature graph of the blended curve">
    <g fill="none">
      <path d={teeth} stroke="#868686" strokeWidth=".8" />
      <path d="M150 626L128 620M1192 626l-2 15" stroke="#777" strokeWidth=".9" />
      <path d="M569 172L478 207M631 209l25 58 30 46" stroke="#8a8a8a" strokeDasharray="3 2" />
      <path d={toPath(leftArc)} stroke="#555" />
      <path d={toPath(rightArc)} stroke="#555" />
      <path d={toPath(blend)} stroke="#d83a4c" strokeWidth="1.2" />
      <path d={toPath(envelope)} stroke="#4a78dc" strokeWidth="1.2" />
      <path d="M36.500 724v31.500H66" stroke="#777" />
    </g>
    <g fill="#444">
      <circle cx="370" cy="282" r="3" />
      <circle cx="569" cy="173" r="3" />
      <circle cx="631" cy="210" r="3" />
      <circle cx="760" cy="404" r="3" />
      <text x="38" y="723">y</text>
      <text x="68" y="756">x</text>
    </g>
  </Drawing>
);

/* ---------- Grasshopper window ---------- */

const GhWindow = styled.section`
  position: absolute;
  top: 13px;
  right: 38px;
  bottom: 72px;
  width: 538px;
  display: flex;
  flex-direction: column;
  background: #f0f0f0;
  border: 1px solid #8a8a8a;
  border-left-width: 2px;
  box-shadow: 0 2px 22px rgba(0, 0, 0, 0.38);
  color: #222;
`;

const GhTitle = styled.header`
  flex: none;
  height: 31px;
  display: flex;
  align-items: center;
  padding-left: 6px;
  background: #fff;
  h1 { flex: 1; margin: 0; font: 12px/16px ${UI}; }
`;

const CaptionButton = styled.button`
  width: 46px;
  height: 28px;
  display: grid;
  place-items: center;
  svg { width: 12px; height: 12px; fill: none; stroke: #333; }
`;

const GhMenu = styled.nav`
  flex: none;
  height: 30px;
  display: flex;
  align-items: center;
  gap: 20px;
  padding: 0 9px 0 11px;
  background: linear-gradient(90deg, #f0f0f0, #fafafa);
`;

const GhFile = styled.span`
  margin-left: auto;
  font-size: 12px;
`;

const GhTabs = styled.div`
  flex: none;
  height: 23px;
  display: flex;
  color: #777;
  border-bottom: 1px solid #b0b0b0;
`;

const GhTab = styled.button<{ $w: number; $on?: boolean }>`
  flex: none;
  width: ${(p) => p.$w}px;
  height: 23px;
  white-space: nowrap;
  ${(p) =>
    p.$on &&
    css`
      background: #fafafa;
      border: 1px solid #b0b0b0;
      border-bottom: 0;
      border-radius: 6px 8px 0 0;
      color: #222;
      padding: 0 4px 4px 0;
      height: 24px;
    `}
`;

const Ribbon = styled.div`
  flex: none;
  height: 92px;
  padding: 3px 1px 0;
  display: flex;
  align-items: flex-start;
  gap: 3px;
  background: linear-gradient(#cfcfcf, #f2f2f2 75%);
  border-radius: 0 6px 0 0;
`;

const RibbonPanel = styled.section<{ $cols: number }>`
  border: 1px solid #9a9a9a;
  border-radius: 4px;
  background: linear-gradient(#c8c8c8, #ececec);
  overflow: hidden;
  div {
    display: grid;
    grid-template-columns: repeat(${(p) => p.$cols}, 28px);
    grid-auto-rows: 29px;
    padding: 1px 2px 2px 1px;
  }
  button svg { display: block; width: 28px; height: 28px; font-family: ${UI}; }
  h2 {
    position: relative;
    margin: 0;
    height: 14px;
    padding-right: 10px;
    background: linear-gradient(#3c3c3c, #1c1c1c);
    color: #eee;
    font: 11px/14px "Liberation Sans", Arial, sans-serif;
    text-align: center;
  }
  h2 svg { position: absolute; right: 2px; top: 4px; width: 7px; height: 7px; }
`;

const GhToolbar = styled.div`
  flex: none;
  height: 34px;
  display: flex;
  align-items: center;
  background: #fff;
  border-top: 1px solid #888;
`;

const GhTool = styled.button<{ $w: number }>`
  flex: none;
  width: ${(p) => p.$w}px;
  height: 28px;
  display: flex;
  align-items: center;
  justify-content: center;
  svg { flex: none; width: 24px; height: 24px; overflow: visible; }
`;

const GhSpace = styled.span<{ $w: number }>`
  flex: none;
  width: ${(p) => p.$w}px;
`;

const GhArrow = styled.button<{ $w: number }>`
  flex: none;
  width: ${(p) => p.$w}px;
  height: 28px;
  display: flex;
  align-items: center;
  justify-content: center;
  svg { width: 6px; height: 4px; }
`;

const GhOverflow = styled.button`
  margin: 18px 3px 0 auto;
  width: 9px;
  svg { display: block; width: 9px; height: 9px; }
`;

const GhSep = styled.span`
  flex: none;
  width: 1px;
  height: 26px;
  background: #ccc;
`;

const caret = <svg viewBox="0 0 6 4" aria-hidden="true"><path d="M0 0h6L3 4z" fill="#222" /></svg>;

const ZoomSelect = styled.select`
  flex: none;
  width: 136px;
  height: 24px;
  margin: 0 4px;
  padding: 0 2px;
  border: 1px solid #7a7a7a;
  border-radius: 0;
  appearance: none;
  font-size: 12px;
  background: #fff url("data:image/svg+xml,%3Csvg xmlns='http://www.w3.org/2000/svg' viewBox='0 0 9 6'%3E%3Cpath d='M.5.5l4 4 4-4' fill='none' stroke='%23555'/%3E%3C/svg%3E") no-repeat right 4px center / 9px 6px;
`;

const Canvas = styled.div`
  position: relative;
  flex: 1;
  min-height: 0;
  overflow: hidden;
  background: #d4d0c8;
  font: 37px/40px ${UI};
  color: #0c0c0e;
`;

const Wires = styled.svg`
  position: absolute;
  inset: 0;
  width: 100%;
  height: 100%;
`;

const Node = styled.div<{ $x: number; $y: number; $w: number; $h?: number; $step?: number }>`
  position: absolute;
  left: ${(p) => p.$x}px;
  top: ${(p) => p.$y}px;
  width: ${(p) => p.$w}px;
  height: ${(p) => p.$h ?? 80}px;
  display: flex;
  align-items: center;
  justify-content: flex-end;
  white-space: nowrap;
  border: 4px solid #25252a;
  border-radius: 11px;
  padding: 0 24px 3px 0;
  background: linear-gradient(#e9e9ef, #c6c7d4 ${(p) => p.$step ?? 41}%, #9d9eb1 ${(p) => p.$step ?? 41}%, #9597aa);
  box-shadow: inset -2px 2px 1px rgba(255, 255, 255, 0.8), inset 0 -2px 1px rgba(255, 255, 255, 0.25);
`;

const Port = styled.span<{ $x: number; $y: number }>`
  position: absolute;
  left: ${(p) => p.$x}px;
  top: ${(p) => p.$y - 19}px;
  width: 16px;
  height: 38px;
  border: 6px solid #000;
  border-left: 0;
  border-radius: 0 16px 16px 0 / 0 19px 19px 0;
  background: #fff;
`;

const SliderNode = styled(Node)`
  padding: 0;
  justify-content: flex-start;
  background: linear-gradient(#fff, #e9e9e9 24%, #dcdcdc 25%, #c8c8c8);
`;

const SliderLabel = styled.label<{ $w: number }>`
  flex: none;
  width: ${(p) => p.$w}px;
  align-self: stretch;
  display: flex;
  align-items: center;
  justify-content: flex-end;
  padding: 0 24px 4px 0;
  border-right: 4px solid #2a2a2e;
  background: linear-gradient(#ececf2, #cfd0dc 24%, #a3a4b7 24%, #9192a6);
  box-shadow: inset -2px 2px 1px rgba(255, 255, 255, 0.55);
`;

const SliderValue = styled.output<{ $x: number }>`
  position: absolute;
  left: ${(p) => p.$x}px;
  padding-bottom: 4px;
`;

const Ticks = styled.svg`
  position: absolute;
  inset: 0;
  width: 100%;
  height: 100%;
`;

const thumbRound = css`
  appearance: none;
  width: 29px;
  height: 31px;
  border: 7px solid #000;
  border-radius: 50%;
  background: #fff;
`;
const thumbDiamond = css`
  appearance: none;
  width: 21px;
  height: 21px;
  border: 5px solid #000;
  border-radius: 0;
  background: #fff;
  transform: rotate(45deg);
`;

const Range = styled.input<{ $x: number; $w: number; $diamond?: boolean }>`
  position: absolute;
  left: ${(p) => p.$x}px;
  width: ${(p) => p.$w}px;
  height: 31px;
  padding: 0;
  appearance: none;
  background: none;
  &::-webkit-slider-thumb { ${(p) => (p.$diamond ? thumbDiamond : thumbRound)} }
`;

const ToggleLabel = styled.span`
  margin-right: 194px;
`;

const Toggle = styled.button`
  position: absolute;
  right: 3px;
  top: 4px;
  width: 172px;
  height: 72px;
  padding: 0 4px 4px 0;
  border: 4px solid #000;
  border-radius: 4px;
  background: linear-gradient(#585858, #333);
  box-shadow: inset 0 0 0 3px #6e6e6e;
  color: #f4f4f4;
  font: 49px/56px "Liberation Mono", monospace;
`;

const CornerPiece = styled.span`
  position: absolute;
  left: -10px;
  bottom: 0;
  width: 17px;
  height: 29px;
  border: 1px solid #111;
  border-bottom: 0;
  background: linear-gradient(#bbb, #777);
`;

const Compass = styled.svg`
  position: absolute;
  right: 5px;
  bottom: 20px;
  width: 56px;
  height: 54px;
`;

const Cursor = styled.svg`
  position: absolute;
  left: 279px;
  top: 348px;
  width: 28px;
  height: 24px;
`;

const GhStatus = styled.footer`
  flex: none;
  height: 25px;
  display: flex;
  align-items: center;
  gap: 4px;
  padding: 2px 3px 0 2px;
  background: #f2f2f2;
  border-top: 2px solid #fafafa;
  svg { width: 15px; height: 17px; }
  span { flex: 1; }
  small { font-size: 11px; color: #777; margin-right: 8px; }
`;

const Slider = (p: {
  y: number; right: number; label: string; labelW: number; value: string; valueX: number;
  tick: number; step: number; count: number; tall: number[]; at: number; diamond?: boolean; id: string;
}) => {
  const thumb = p.diamond ? 21 : 29;
  const span = p.step * p.count;
  return (
    <SliderNode $x={-20} $y={p.y} $w={p.right + 20} $h={81}>
      <SliderLabel $w={p.labelW + 18} htmlFor={p.id}>{p.label}</SliderLabel>
      <Ticks aria-hidden="true">
        <g stroke="#b8b8b8" strokeWidth="3" fill="none">
          <path d={`M${p.tick + 16} 37H${p.tick + 16 + span}`} />
          {Array.from({ length: p.count + 1 }, (_, i) => (
            <path key={i} d={`M${p.tick + 16 + i * p.step} 38V${p.tall.includes(i) ? 15 : 22}`} />
          ))}
        </g>
      </Ticks>
      <SliderValue $x={p.valueX + 16} htmlFor={p.id}>{p.value}</SliderValue>
      <Range
        id={p.id}
        type="range"
        min={0}
        max={1}
        step="any"
        defaultValue={p.at}
        $diamond={p.diamond}
        $x={p.tick + 16 - Math.floor(thumb / 2)}
        $w={span + thumb}
      />
    </SliderNode>
  );
};

const Hex = ({ children }: { children: ReactNode }) => (
  <svg viewBox="0 0 28 28" aria-hidden="true">
    <path d="M8 3.500h12L26 14l-6 10.500H8L2 14z" fill="url(#hex)" stroke="#000" />
    <g fill="none" stroke="#fff" strokeWidth="1.6">{children}</g>
  </svg>
);
const Tile = ({ children, fill = "url(#metal)" }: { children: ReactNode; fill?: string }) => (
  <svg viewBox="0 0 28 28" aria-hidden="true">
    <rect x="2.5" y="2.5" width="23" height="23" rx="2" fill={fill} stroke="#222" strokeWidth="1.3" />
    {children}
  </svg>
);
const Bare = ({ children }: { children: ReactNode }) => <svg viewBox="0 0 28 28" aria-hidden="true">{children}</svg>;

const hexText = (t: string, size: number) => (
  <text x="14" y={size > 15 ? 21 : 20} textAnchor="middle" fontSize={size} fontWeight="700" fill="#fff" stroke="none" fontFamily="Liberation Serif, serif">{t}</text>
);

const panels: { title: string; cols: number; icons: [string, ReactNode][] }[] = [
  {
    title: "Geometry", cols: 6,
    icons: [
      ["Point", <Hex><path d="M10 10l8 8M18 10l-8 8" strokeWidth="3.2" /></Hex>],
      ["Circle", <Hex><ellipse cx="14" cy="14" rx="7" ry="5" strokeWidth="2.2" /></Hex>],
      ["Curve", <Hex><ellipse cx="14" cy="14" rx="8" ry="5" transform="rotate(-40 14 14)" stroke="#ccc" /><ellipse cx="14" cy="14" rx="4" ry="2" transform="rotate(-40 14 14)" stroke="#999" /></Hex>],
      ["Plane", <Hex><path d="M6 14l12-6 4 8-11 5z" fill="#e8e8e8" stroke="#fff" strokeWidth="1" /><path d="M14 12l3 4" stroke="#555" strokeWidth="1.2" /></Hex>],
      ["Box", <Hex><path d="M8 9l7-2 5 3v9l-6 3-6-4z" fill="#aaa" stroke="#eee" strokeWidth="1" /><path d="M8 9l6 3 6-2M14 12v9" stroke="#eee" strokeWidth="1" /></Hex>],
      ["Mesh", <Hex><path d="M14 6v16M7 14h14M9 9h10v10H9zM9 9l10 10M19 9L9 19" stroke="#bbb" strokeWidth="1" /></Hex>],
      ["Vector", <Hex><path d="M8 20L17 11" strokeWidth="3.2" /><path d="M12 8h8v8z" fill="#fff" stroke="none" /></Hex>],
      ["Arc", <Hex><path d="M8 10q11-1 12 12M7 10l5-4M7 10l5 4" strokeWidth="1.8" /></Hex>],
      ["Line", <Hex><path d="M9 19L19 9" strokeWidth="2.4" /><rect x="7" y="17" width="4" height="4" fill="#222" strokeWidth="1.2" /><rect x="17" y="7" width="4" height="4" fill="#222" strokeWidth="1.2" /></Hex>],
      ["Rectangle", <Hex><path d="M14 9l5 5-5 5-5-5z" strokeWidth="2" /><path d="M9 8l-2 2M19 8l2 2M9 20l-2-2M19 20l2-2" stroke="#999" strokeWidth="1" /></Hex>],
      ["Brep", <Hex><path d="M8 12l6-5q6 1 7 5l-6 9q-6-1-7-9z" fill="#ccc" stroke="#fff" strokeWidth="1" /></Hex>],
      ["Twisted Box", <Hex><path d="M6 17l6-3 4-6M12 14l6 6M14 12l8-2" stroke="#aaa" /></Hex>],
    ],
  },
  {
    title: "Primitive", cols: 2,
    icons: [
      ["Boolean", <Hex><circle cx="14" cy="14" r="6.5" fill="#fff" stroke="none" /><circle cx="15.5" cy="12.5" r="3.5" fill="#222" stroke="none" /></Hex>],
      ["Number", <Hex>{hexText("0.1", 14)}</Hex>],
      ["Integer", <Hex>{hexText("7", 19)}</Hex>],
      ["Text", <Hex>{hexText("A", 19)}</Hex>],
    ],
  },
  {
    title: "Input", cols: 4,
    icons: [
      ["Number Slider", <Tile><path d="M14 7v7M11 13h6l-3 4zM6 20h16M7 22v-3M10 22v-3M13 22v-3M16 22v-3M19 22v-3M22 22v-3" stroke="#111" strokeWidth="1.5" /></Tile>],
      ["Toggle", <Tile><path d="M10 5h9v19h-9z" fill="#111" /><path d="M12 7h5v8h-5z" fill="#eee" /></Tile>],
      ["Digit Scroller", <Tile><path d="M10 5h8l-3 5M19 13h-6v4q6 0 5 3t-6 2" fill="none" stroke="#444" strokeWidth="2" /></Tile>],
      ["Graph Mapper", <Tile fill="url(#pink)"><path d="M4 18h20" stroke="#fff" /><circle cx="5" cy="18" r="1.5" fill="#fff" /><circle cx="18" cy="18" r="1.5" fill="#fff" /></Tile>],
      ["Panel Sketch", <Tile fill="#fccc38"><path d="M6 21l3-5 0 5 4-8 0 8 5-11-1 9 5-9" fill="none" stroke="#b06c00" strokeWidth="1.7" /></Tile>],
      ["Control Knob", <Bare><circle cx="14" cy="14" r="11.5" fill="#999" stroke="#333" /><circle cx="14" cy="14" r="8" fill="#333" stroke="#ddd" /><path d="M20 10l4 4-4 4z" fill="#222" /></Bare>],
      ["Value List", <Tile><path d="M6 7h16v4H6zM6 12.500h16v4H6zM6 18h16v4H6z" fill="#ccc" stroke="#333" /></Tile>],
      ["Colour Swatch", <Tile fill="#38c838"><path d="M3 3h7v8H3z" fill="#c8f020" /><path d="M10 3h7v8h-7z" fill="#187818" /><path d="M17 11h8v7h-8z" fill="#106810" /><path d="M3 18h7v7H3z" fill="#205c20" /><path d="M18 18h7v7h-7z" fill="#80ffb0" /></Tile>],
    ],
  },
  {
    title: "Util", cols: 5,
    icons: [
      ["Cherry Picker", <Bare><path d="M9 18q0-8 8-13M19 19q0-8-3-13" stroke="#4a7c20" strokeWidth="1.5" fill="none" /><path d="M8 7q5-6 11-3-3 6-11 3z" fill="#58a028" /><circle cx="8.5" cy="19.5" r="4.5" fill="#d81414" stroke="#700" /><circle cx="19" cy="20.5" r="4.5" fill="#d81414" stroke="#700" /></Bare>],
      ["Timer", <Tile><path d="M9 9q-3 9 5 11 8-1 6-8M18 9q-3-2-4 0M9 9l5 6" fill="none" stroke="#222" strokeWidth="2.8" /></Tile>],
      ["Jump", <Bare><path d="M4 11h12V7l8 7-8 7v-4H4z" fill="#ddd" stroke="#444" strokeWidth="1.3" /></Bare>],
      ["Text Tag", <Bare><path d="M8 3h12l6 11-3 4H5l-3-4z" fill="#222" /><text x="14" y="17" textAnchor="middle" fontSize="17" fontWeight="700" fill="#fff" fontFamily="Liberation Serif, serif">A</text><path d="M2 18h24v7H2z" fill="#6c1c94" /><path d="M4 20h8M4 23h8M14 20l3 3 3-3M20 23h4" stroke="#fff" fill="none" /></Bare>],
      ["Galapagos", <Bare><path d="M12 4h5v7l6 11q0 2-2 2H8q-2 0-2-2l6-11z" fill="#f0f0f0" stroke="#777" /><path d="M10 15h9l3.500 7q0 1.500-2 1.500H8.500q-2 0-1.500-1.500z" fill="#d81c6c" /></Bare>],
      ["Tree", <Tile><path d="M14 25v-9M14 18l-5-5M14 16l5-5M14 19l7-4" stroke="#111" strokeWidth="1.8" /><path d="M6 9h3V6h4v2h4V6h3v4h3v5h-3v-3H9v3H6z" fill="#333" /></Tile>],
      ["Arrow", <Bare><path d="M4 10h11V6l9 8-9 8v-4H4z" fill="#444" stroke="#222" /></Bare>],
      ["Scribble", <Bare><circle cx="13" cy="12" r="8" fill="none" stroke="#333" strokeWidth="1.8" /><path d="M14 14l11 10M20 24h5v-4" stroke="#333" fill="none" /></Bare>],
      ["Cluster", <Bare><circle cx="10.5" cy="11" r="7" fill="#d0d0d0" stroke="#888" /><circle cx="10.5" cy="11" r="3" fill="#999" /><circle cx="18" cy="17" r="7" fill="#e04880" stroke="#902050" /><circle cx="16" cy="15" r="3" fill="#fff" fillOpacity=".7" /></Bare>],
      ["Expression", <Bare><text x="14" y="14" textAnchor="middle" fontSize="14" fontStyle="italic" fontWeight="700" fill="#333" fontFamily="Liberation Serif, serif">f(x)</text><path d="M9 18h11l4 7H5z" fill="#f07ca0" stroke="#a03c60" strokeWidth=".8" /></Bare>],
    ],
  },
];

const ghTabs: [string, number][] = [
  ["Params", 54], ["Maths", 46], ["Sets", 39], ["Vector", 51], ["Curve", 44], ["Surface", 56],
  ["Mesh", 45], ["Int", 28], ["Trns", 39], ["Dis", 33], ["Cygnus Tools", 84],
];

const Grasshopper = () => (
  <GhWindow aria-label="Grasshopper">
    <GhTitle>
      <h1>Grasshopper - s-6-10-2-5-15-2-7-5-5-5*</h1>
      <CaptionButton aria-label="Minimize"><svg viewBox="0 0 12 12"><path d="M1 6.500h10" /></svg></CaptionButton>
      <CaptionButton aria-label="Maximize"><svg viewBox="0 0 12 12"><path d="M1.500 1.500h9v9h-9z" /></svg></CaptionButton>
      <CaptionButton aria-label="Close"><svg viewBox="0 0 12 12"><path d="M1 1l10 10M11 1L1 11" /></svg></CaptionButton>
    </GhTitle>
    <GhMenu>
      {["File", "Edit", "View", "Display", "Solution", "Help"].map((m) => <MenuItem key={m}>{m}</MenuItem>)}
      <GhFile>s-6-10-2-5-15-2-7-5-5-5</GhFile>
    </GhMenu>
    <GhTabs>
      {ghTabs.map(([t, w], i) => <GhTab key={t} $w={w} $on={i === 0}>{t}</GhTab>)}
    </GhTabs>
    <Ribbon>
      {panels.map((p) => (
        <RibbonPanel key={p.title} $cols={p.cols}>
          <div>{p.icons.map(([n, g]) => <button key={n} aria-label={n}>{g}</button>)}</div>
          <h2>{p.title}<svg viewBox="0 0 8 8" aria-hidden="true"><path d="M4 0v8M0 4h8" stroke="#999" strokeWidth="1.5" /></svg></h2>
        </RibbonPanel>
      ))}
    </Ribbon>
    <GhToolbar>
      <GhTool $w={28} aria-label="Template"><svg viewBox="0 0 24 24"><path d="M2 4h20v16H2z" fill="#fff" stroke="#333" strokeWidth="1.5" /><path d="M8 6v12M16 6v12" stroke="#111" strokeWidth="1.3" /><circle cx="8" cy="11" r="2.2" /><circle cx="16" cy="14" r="2.2" /></svg></GhTool>
      <GhSpace $w={1} />
      <GhSep />
      <GhTool $w={34} aria-label="Open"><svg viewBox="0 0 24 24"><path d="M5 12V3l4-2h8l2 2v9" fill="#fff" stroke="#777" /><path d="M3 22V11h9l3-2h7v13z" fill="#6cc82c" stroke="#3c8010" /></svg></GhTool>
      <GhTool $w={28} aria-label="Save"><svg viewBox="0 0 24 24"><path d="M1 1h22v22H4l-3-3z" fill="#2860c8" stroke="#102c70" /><path d="M5 2h14v10H5z" fill="#eef2f8" /><path d="M7 5h10M7 8h10" stroke="#bbb" /><path d="M6 15h11v8H6z" fill="#b8c4dc" /><path d="M8 16h4v6H8z" fill="#2040a0" /></svg></GhTool>
      <GhSpace $w={5} />
      <GhSep />
      <ZoomSelect aria-label="Zoom" defaultValue="367%"><option>367%</option></ZoomSelect>
      <GhTool $w={28} aria-label="Zoom extents"><svg viewBox="0 0 24 24"><path d="M3 9V3h6M15 3h6v6M21 15v6h-6M9 21H3v-6" fill="none" stroke="#222" strokeWidth="4" /><path d="M10 10l4 4M14 10l-4 4" stroke="#222" strokeWidth="1.5" /></svg></GhTool>
      <GhArrow $w={12} aria-label="Zoom options">{caret}</GhArrow>
      <GhTool $w={31} aria-label="Preview"><svg viewBox="0 0 24 24"><path d="M1 12Q12 1 23 12 12 22 1 12z" fill="#fff" stroke="#333" strokeWidth="1.3" /><circle cx="12" cy="12" r="5.5" fill="#4c9cc8" stroke="#205070" /><circle cx="12" cy="12" r="2.5" /></svg></GhTool>
      <GhArrow $w={8} aria-label="Preview options">{caret}</GhArrow>
      <GhTool $w={34} aria-label="Sketch"><svg viewBox="0 0 24 24"><path d="M2 9q6 2 3 9t7 4" fill="none" stroke="#222" strokeWidth="1.5" /><path d="M9 18L18 4l4 5-7 12z" fill="#e04030" stroke="#801810" /><path d="M9 18l-2 5 8-2z" fill="#f4e0c0" stroke="#333" strokeWidth=".7" /></svg></GhTool>
      <GhSpace $w={26} />
      <GhSep />
      <GhSpace $w={10} />
      <GhTool $w={27} aria-label="No preview"><svg viewBox="0 0 24 24"><path d="M2 2h9q8-3 11 3 2 6-3 13-6 6-12 3 5-12-5-19z" fill="#189090" stroke="#084c4c" /><ellipse cx="17" cy="7" rx="3" ry="4" fill="#58c8c4" /></svg></GhTool>
      <GhTool $w={28} aria-label="Wireframe preview"><svg viewBox="0 0 24 24"><path d="M3 10q2-8 10-8 9 0 10 7-2 12-12 13-8-3-8-12z" fill="#e4e4e4" stroke="#777" /><path d="M7 4q10-5 15 4 0 5-4 8z" fill="#60b020" stroke="#2c6008" /><path d="M2 4l18 15" stroke="#222" strokeWidth="1.5" /></svg></GhTool>
      <GhTool $w={28} aria-label="Shaded preview"><svg viewBox="0 0 24 24"><circle cx="12" cy="12" r="10" fill="#d8d8d8" stroke="#555" /><path d="M12 2a10 10 0 0 0 0 20z" fill="#f09030" stroke="#704010" /></svg></GhTool>
      <GhSpace $w={3} />
      <GhSep />
      <GhTool $w={33} aria-label="Document preview"><svg viewBox="0 0 24 24"><circle cx="12" cy="12" r="9.5" fill="url(#ballSky)" stroke="#1c4890" /></svg></GhTool>
      <GhArrow $w={6} aria-label="Document preview options">{caret}</GhArrow>
      <GhOverflow aria-label="More"><svg viewBox="0 0 10 10"><path d="M1 1.500h8" stroke="#222" strokeWidth="1.5" /><path d="M1 5h8L5 9z" fill="#222" /></svg></GhOverflow>
    </GhToolbar>
    <Canvas>
      <Wires aria-hidden="true">
        <path d="M472 0V760" stroke="#b2aea5" strokeWidth="3" />
        <path d="M0 181H540M0 375H540" stroke="#bebab1" strokeWidth="3" />
        <g fill="none" stroke="#14120e" strokeWidth="11" strokeOpacity=".66">
          <path d="M100 18C260 18 360 15 536 14" />
          <path d="M100 18C280 18 380 32 536 46" />
          <path d="M30 100C200 100 340 112 536 127" />
          <path d="M26 186C200 186 340 198 536 206" />
          <path d="M90 263C260 263 340 260 536 259" />
          <path d="M90 263C280 263 360 275 536 283" />
          <path d="M340 508C420 508 480 509 536 509" />
          <path d="M340 508C420 508 480 512 536 513" />
        </g>
        <path d="M510 345H540" stroke="#0a0a0a" strokeWidth="12" />
      </Wires>
      <Port $x={100} $y={18} />
      <Port $x={26} $y={100} />
      <Port $x={22} $y={186} />
      <Port $x={88} $y={263} />
      <Port $x={500} $y={344} />
      <Port $x={496} $y={430} />
      <Port $x={334} $y={508} />
      <Node $x={-20} $y={-22} $w={120}>v A1</Node>
      <Node $x={-20} $y={60} $w={46} />
      <Node $x={-20} $y={145} $w={42} />
      <Node $x={-20} $y={223} $w={109}>v B1</Node>
      <Slider id="ratio-a" y={304} right={500} label="io" labelW={57} value="0.555474" valueX={108} tick={94} step={37} count={10} tall={[0, 5, 10]} at={0.548} />
      <Slider id="ratio-b" y={390} right={496} label="io" labelW={54} value="0.605305" valueX={122} tick={90} step={37} count={10} tall={[0, 5, 10]} at={0.601} />
      <Node $x={-20} $y={464} $w={354} $h={88} $step={36}>
        <ToggleLabel id="toggle-label">On/Off</ToggleLabel>
        <Toggle aria-labelledby="toggle-label" aria-pressed="true">True</Toggle>
      </Node>
      <Slider id="divide" y={561} right={700} label="c Divide" labelW={167} value="100" valueX={252} tick={204} step={37} count={12} tall={[0, 5, 10]} at={0.041} diamond />
      <Slider id="scale" y={642} right={700} label="c Scale" labelW={145} value="100" valueX={248} tick={182} step={37} count={12} tall={[0, 5, 10]} at={0.082} />
      <CornerPiece />
      <Compass viewBox="0 0 56 54" aria-hidden="true">
        <circle cx="30" cy="27" r="22.5" fill="none" stroke="#111" strokeWidth="3" strokeDasharray="12 3 5 3" />
        <circle cx="30" cy="27" r="20.5" fill="url(#knob)" stroke="#fff" strokeWidth="2" />
        <path d="M30 8l-2-1h5zM30 46l-2 3h5zM11 27l-2-2v5zM49 27l2-2v5z" fill="#fff" stroke="#fff" strokeWidth="2" />
        <path d="M1 22l5-4v3h4v3H6v3z" fill="#111" />
      </Compass>
      <Cursor viewBox="0 0 28 24" aria-hidden="true">
        <path d="M0 6l5-4v3h16V2l6 4-6 4V7H5v3z" fill="#fff" stroke="#888" strokeWidth=".6" />
        <path d="M9 3v16l4-3 3 7 3-1.500-3-6h5z" fill="#fff" stroke="#444" strokeWidth=".8" />
      </Cursor>
    </Canvas>
    <GhStatus>
      <svg viewBox="0 0 15 17" aria-hidden="true"><ellipse cx="7.5" cy="8.5" rx="7" ry="8" fill="#1c6cb8" stroke="#0c2c58" /><path d="M5.500 3v6M9.500 3v6M5.500 11v3M9.500 11v3" stroke="#fff" strokeWidth="1.4" /></svg>
      <span>Save successfully completed... (90 seconds ago)</span>
      <small>1.0.0007</small>
      <svg viewBox="0 0 15 17" aria-hidden="true"><path d="M11 5h2v2h-2zM11 9h2v2h-2zM11 13h2v2h-2zM7 9h2v2H7zM7 13h2v2H7zM3 13h2v2H3z" fill="#999" /></svg>
    </GhStatus>
  </GhWindow>
);

/* ---------- data ---------- */

const menus: [string, number][] = [
  ["File", 31], ["Edit", 34], ["View", 39], ["Curve", 45], ["Surface", 53], ["SubD", 42], ["Solid", 40], ["Mesh", 43],
  ["Dimension", 71], ["Transform", 67], ["Tools", 40], ["Analyze", 55], ["Render", 51], ["Panels", 49], ["Help", 40],
];
const tabs: [string, number][] = [
  ["Standard", 66], ["CPlanes", 63], ["Set View", 65], ["Display", 58], ["Select", 53], ["Viewport Layout", 109], ["Visibility", 63],
  ["Transform", 75], ["Curve Tools", 82], ["Surface Tools", 91], ["Solid Tools", 77], ["SubD Tools", 79],
];
const standardTools = [
  "New", "Open", "Save*", "Print", "Export", "Cut", "Copy", "Paste", "Undo*", "Pan", "Rotate", "Zoom", "Zoom Window", "Zoom Extents",
  "Zoom Selected", "Zoom Previous*", "4View*", "Car*", "CPlane*", "Circle*", "Shapes*", "Bulb*", "Lock*", "Layer*", "Color*", "Shaded",
  "Shaded Selected*", "Rendered*", "Spotlight*", "Options*", "Dimension*", "Grasshopper*", "Help*",
];
const curveTools = [
  "Fillet", "Fillet Muted", "Corner", "Zigzag", "Sphere Points", "Box Points A", "Box Points B", "Box Points C", "Axis", "Bell", "Bell Muted",
  "Brush", "Grid Points", "|", "Loft Ring", "Loft Band", "Patch Light", "Patch", "Box Edge", "Cross", "|", "Four Patches", "Curved Patch",
  "Trolley A", "Trolley B", "Trolley Box", "Trolley Box Light", "Trolley Back", "|", "Sweep1", "Sweep2", "Angle A", "Angle B", "Angle C",
  "Tilt", "Fan", "Step A", "Step B", "Step C", "Step D", "Layers", "Offset", "Target Box", "Target Arrows", "Box Tag", "Zebra", "Continuity",
  "Puzzle", "Split Blue", "Split Faint",
];
const solidTools = [
  "Box*", "Cylinder", "Sphere*", "Sphere 2", "Ellipsoid*", "Paraboloid", "Cone", "Truncated Cone", "Pyramid", "Truncated Pyramid", "Tube",
  "Torus", "Pipe", "Pipe Round", "Extrude", "Extrude Cap*", "Boolean",
];
const viewTools = [
  "Car Perspective", "Car Top", "Car Bottom", "Car Left", "Car Right", "Car Front", "Car Back", "Jet Top", "Jet Bottom", "Jet Front",
  "Jet Back", "Heli Left", "Heli Right", "Set Target", "Target Object",
];
const planeTools = [
  "Plane Origin", "Plane Elevation", "Plane Object", "Plane Surface", "Plane Curve", "Plane Rotate", "Plane Vertical", "Plane 3 Points",
  "Plane X", "Plane Z", "|", "Plane Down", "Plane Up", "Plane Left", "Plane Back", "Plane Origin", "Plane X", "|", "Plane Z", "Plane Origin", "Plane X", "Plane 3 Points",
];
const drawTools = ["Squares", "Squares", "Trim", "Fillet", "Axis", "Axis", "Axis", "Axis", "Axis", "Angle45", "Move", "Ellipse"];
const snaps: [string, number, boolean, boolean?][] = [
  ["End", 43, true], ["Near", 48, false], ["Point", 51, true], ["Mid", 44, false], ["Cen", 44, true], ["Int", 37, false], ["Perp", 47, true],
  ["Tan", 42, false], ["Quad", 52, false], ["Knot", 48, false], ["Vertex", 57, false], ["Project", 68, false, true], ["Disable", 60, false, true],
];

const gear = (
  <svg viewBox="0 0 28 28" aria-hidden="true">
    <path d={gearPath} fill="none" stroke="#888" strokeWidth="1.6" />
    <circle cx="14" cy="14.5" r="3.5" fill="none" stroke="#888" strokeWidth="1.6" />
  </svg>
);
const chevron = <svg viewBox="0 0 12 8" aria-hidden="true"><path d="M2 2l4 4 4-4" fill="none" stroke="#555" strokeWidth="1.3" /></svg>;
const up = <svg viewBox="0 0 8 5" aria-hidden="true"><path d="M1 5l3-4 3 4z" fill="#333" /></svg>;
const down = <svg viewBox="0 0 8 5" aria-hidden="true"><path d="M1 0l3 4 3-4z" fill="#333" /></svg>;

export default function App() {
  return (
    <Page>
      <Global />
      <Defs />
      <MenuBar>{menus.map(([m, w]) => <MenuItem key={m} $w={w}>{m}</MenuItem>)}</MenuBar>
      <CommandArea>
        <Grip $h={36} />
        <CommandLines>
          <History>Display mode set to "FDS Shaded 1".</History>
          <Prompt>Command:<input type="text" /></Prompt>
        </CommandLines>
        <Spinner>{up}{down}{up}{down}</Spinner>
      </CommandArea>
      <ToolbarBand>
        <MainToolbar>
          <MainTools>
            <TabRow>
              {tabs.map(([t, w], i) => <ToolTab key={t} $w={w} $on={i === 0}>{t}</ToolTab>)}
              <ToolTab $w={24}>Me</ToolTab>
              <TabMore aria-label="More tabs">»</TabMore>
              <GearButton aria-label="Toolbar options">{gear}</GearButton>
            </TabRow>
            <IconRow><ToolLead /><Tools items={standardTools} /></IconRow>
          </MainTools>
        </MainToolbar>
        <SideTools $w={174}>
          <Grip $h={50} />
          <Tools items={["Point", "Edit Points", "Closed Points", "Circle Points", "Arc Points"]} />
          <More>»</More>
        </SideTools>
        <SideTools>
          <Grip $h={50} />
          <Tools items={["Select", "Move*", "Trim", "Split", "Join", "Explode", "Edit Points*", "Closed Points"]} />
        </SideTools>
        <Trailing><More>»</More></Trailing>
      </ToolbarBand>
      <CurveBand><ToolLead /><Tools items={curveTools} /></CurveBand>
      <Body>
        <Viewport>
          <CurvatureGraph />
          <ViewTitle>Top<svg viewBox="0 0 10 16" aria-hidden="true"><path d="M2 6h7L5.500 10z" fill="#1e2c5c" /></svg></ViewTitle>
        </Viewport>
        <Dock>
          <DockTabs>{gear}</DockTabs>
          <DockBody>
            <DockFields>
              <DockField>{chevron}</DockField>
              <DockField $mt={28}>{chevron}</DockField>
              <DockField $fill="#fbfbfc" />
              <DockField />
              <DockField $fill="#dcdde0" />
              <DockField $fill="#c4c5c8" />
              <DockSpin>{up}{down}</DockSpin>
            </DockFields>
            <ScrollBar>
              <svg viewBox="0 0 10 8" aria-hidden="true"><path d="M1 6l4-4 4 4" fill="none" stroke="#444" strokeWidth="1.5" /></svg>
              <i />
              <b />
              <svg viewBox="0 0 10 8" aria-hidden="true"><path d="M1 2l4 4 4-4" fill="none" stroke="#444" strokeWidth="1.5" /></svg>
            </ScrollBar>
          </DockBody>
          <DockButton aria-label="Apply" />
        </Dock>
      </Body>
      <ViewTabs>
        <ViewTab $w={35} $on>Top</ViewTab>
        <ViewTab $w={36}>Top</ViewTab>
        <ViewTab $w={40}>Front</ViewTab>
        <ViewTab $w={46}>Right</ViewTab>
        <PlusTab aria-label="New viewport"><svg viewBox="0 0 12 12"><path d="M4.500 1.500h3v3h3v3h-3v3h-3v-3h-3v-3h3z" fill="#fff" stroke="#888" /></svg></PlusTab>
      </ViewTabs>
      <SolidBand>
        <Grip $h={32} />
        <Tools items={solidTools} />
        <BandEnd $w={14} />
        <Grip $h={32} />
        <Tools items={viewTools} />
        <BandEnd $w={13} />
        <Grip $h={32} />
        <BandLead />
        <Tools items={planeTools} />
        <BandEnd $w={8} />
        <Grip $h={32} />
        <Tools items={drawTools} />
      </SolidBand>
      <SnapBand>
        <SnapLead><Grip $h={22} /></SnapLead>
        {snaps.map(([t, w, on, off]) => (
          <SnapOption key={t} $w={w}>
            <input type="checkbox" defaultChecked={on} disabled={off} />
            {t}
          </SnapOption>
        ))}
      </SnapBand>
      <StatusBar>
        <StatusCell $w={50}>CPlane</StatusCell>
        <StatusCell $w={88}>x 123.28</StatusCell>
        <StatusCell $w={88}>y 72.28</StatusCell>
        <StatusCell $w={88}>z</StatusCell>
        <StatusCell $w={88}>Centimeters</StatusCell>
        <StatusCell $w={168} $left><Swatch />Default</StatusCell>
        <StatusCell $w={65}>Grid Snap</StatusCell>
        <StatusCell $w={45} $on>Ortho</StatusCell>
        <StatusCell $w={47}>Planar</StatusCell>
        <StatusCell $w={48} $on>Osnap</StatusCell>
        <StatusCell $w={73}>SmartTrack</StatusCell>
        <StatusCell $w={59} $on>Gumball</StatusCell>
        <StatusCell $w={92}>Record History</StatusCell>
        <StatusCell $w={40}>Filter</StatusCell>
        <StatusCell $w={874} $left>Absolute tolerance: 0.01</StatusCell>
      </StatusBar>
      <Grasshopper />
    </Page>
  );
}
